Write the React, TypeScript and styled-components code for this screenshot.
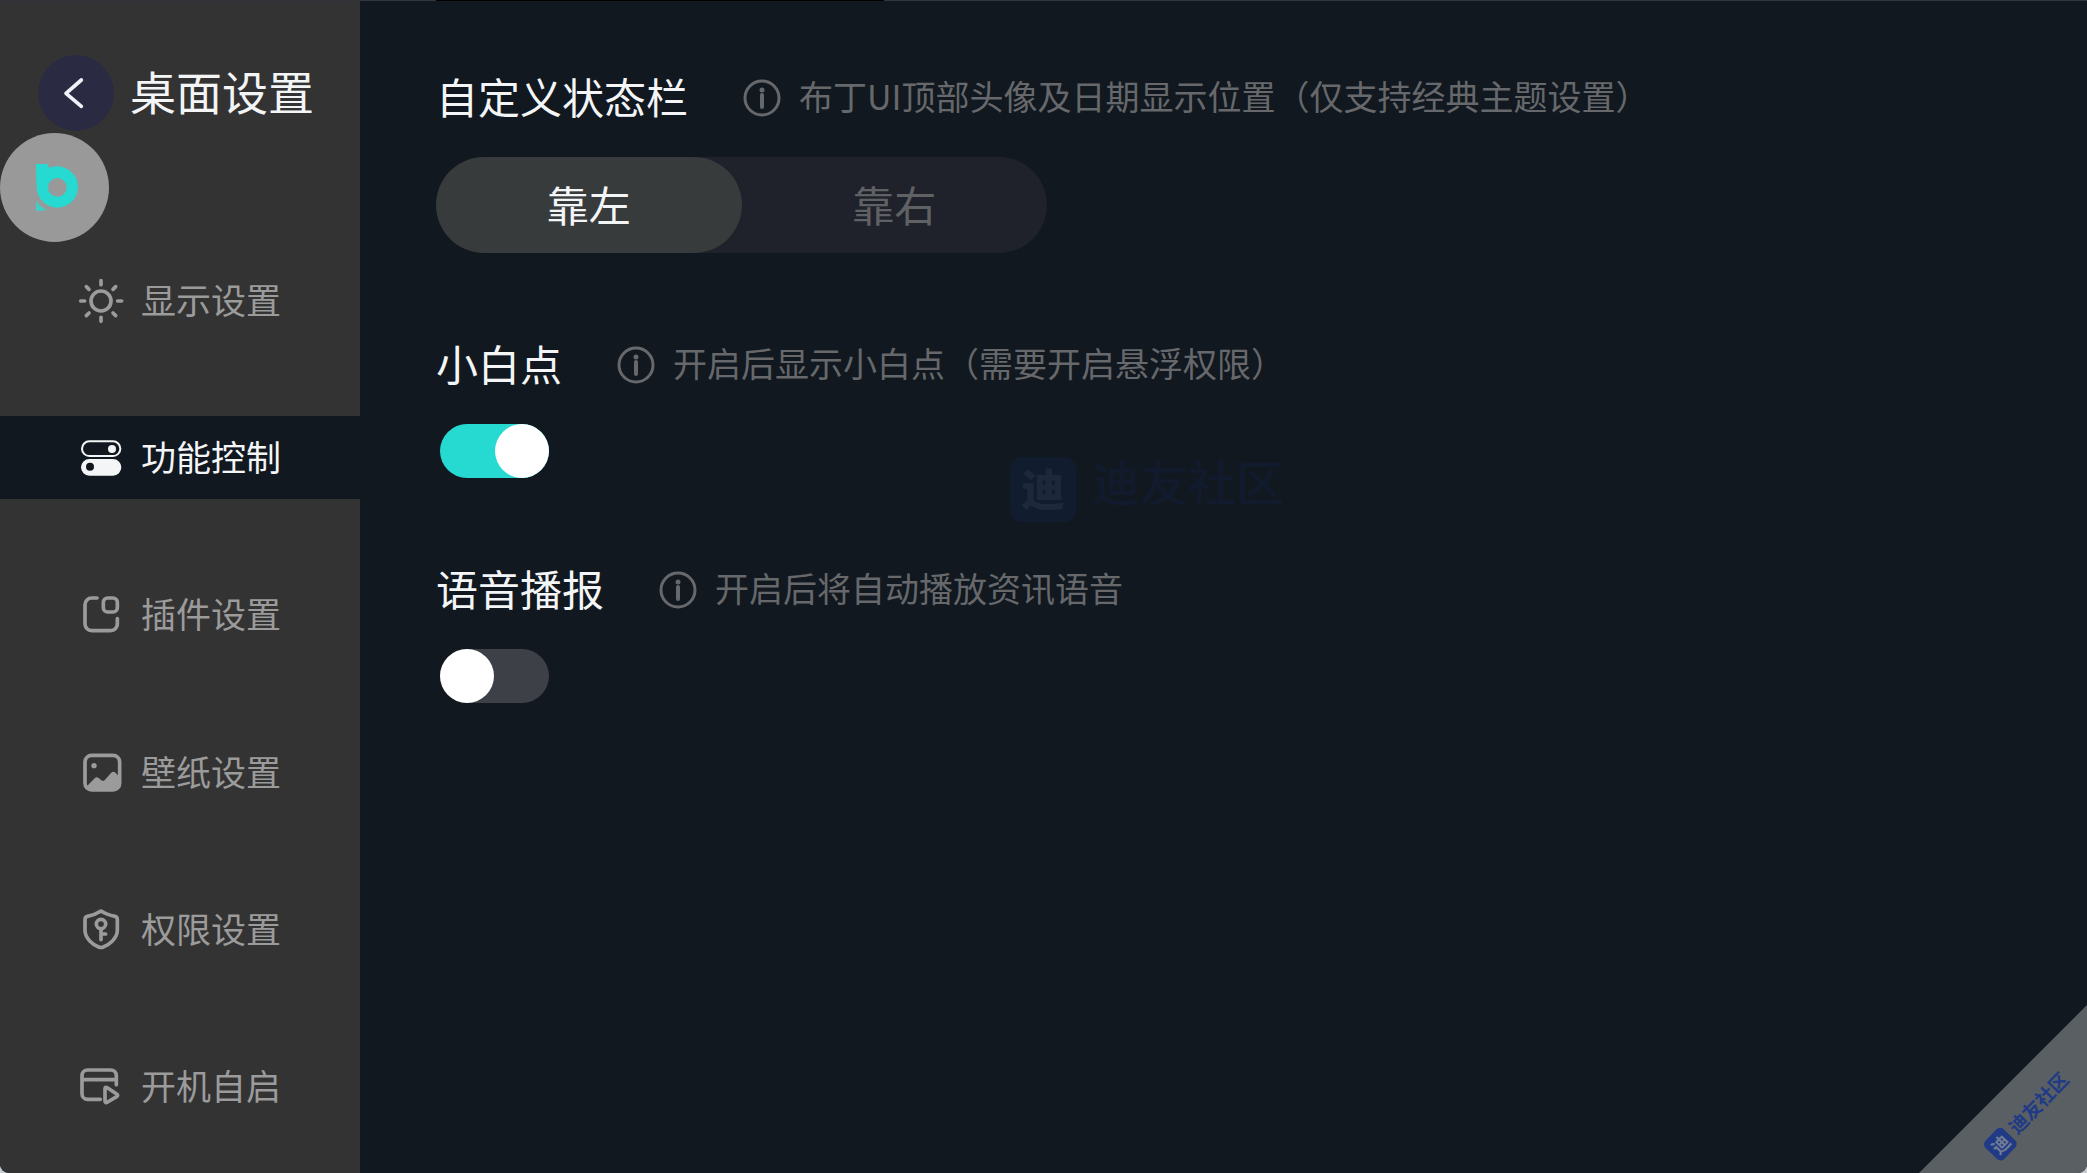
import React, { useState } from "react";
import styled, { createGlobalStyle } from "styled-components";

const color = {
  page: "#11181f",
  sidebar: "#333333",
  muted: "#9b9b9b",
  hint: "#66686b",
  text: "#f3f5f7",
  accent: "#26dad1",
};

const GlobalStyle = createGlobalStyle`
  * { box-sizing: border-box; }
  body {
    margin: 0;
    background: #c9ccd0;
    color: ${color.text};
    font-family: "Noto Sans CJK SC", "Noto Sans", sans-serif;
  }
  button, input { font: inherit; margin: 0; }
`;

const Screen = styled.div`
  position: relative;
  display: grid;
  grid-template-columns: 360px minmax(0, 1fr);
  min-height: 100vh;
  background: ${color.page};
  border-radius: 0 0 9px 9px;
  overflow: hidden;
`;

const TopEdge = styled.div`
  position: absolute;
  inset: 0 0 auto;
  height: 1px;
  background: linear-gradient(90deg, #30363b 436px, #000 436px, #000 884px, #30363b 884px);
`;

const Sidebar = styled.aside`
  display: flex;
  flex-direction: column;
  background: ${color.sidebar};
`;

const SidebarHeader = styled.header`
  display: flex;
  align-items: flex-start;
  gap: 16px;
  height: 259px;
  padding: 55px 0 0 38px;
`;

const BackButton = styled.button`
  display: flex;
  width: 76px;
  height: 76px;
  padding: 0;
  border: 0;
  border-radius: 50%;
  background: #2a2b43;
  cursor: pointer;
`;

const SidebarTitle = styled.h1`
  margin: 0;
  font-size: 46px;
  font-weight: 400;
  line-height: 70px;
  white-space: nowrap;
`;

const Nav = styled.nav`
  flex: 1;
  display: flex;
  flex-direction: column;
  justify-content: space-between;
  gap: 24px;
  padding-bottom: 44px;
`;

const NavLink = styled.a<{ $active: boolean }>`
  display: flex;
  align-items: center;
  gap: 18px;
  height: 83px;
  padding-left: 79px;
  color: ${(p) => (p.$active ? color.text : color.muted)};
  background: ${(p) => (p.$active ? color.page : "transparent")};
  text-decoration: none;
`;

const NavLabel = styled.span`
  padding-bottom: 4px;
  font-size: 35px;
  line-height: 48px;
  white-space: nowrap;
`;

const NavIcon = styled.svg`
  flex: none;
  width: 44px;
  height: 44px;
  overflow: visible;
  fill: none;
  stroke: currentColor;
  stroke-width: 11;
  stroke-linecap: round;
  stroke-linejoin: round;
`;

const FloatingBall = styled.button`
  position: absolute;
  left: 0;
  top: 133px;
  display: flex;
  width: 109px;
  height: 109px;
  padding: 0;
  border: 0;
  border-radius: 50%;
  background: #999999;
  cursor: pointer;
`;

const Main = styled.main`
  display: flex;
  flex-direction: column;
  align-items: flex-start;
  padding: 68px 76px;
`;

const Section = styled.section`
  margin-bottom: 82px;
`;

const SectionHead = styled.div`
  display: flex;
  align-items: flex-start;
  height: 60px;
  white-space: nowrap;
`;

const SectionTitle = styled.h2`
  margin: 0 55px 0 0;
  font-size: 42px;
  font-weight: 400;
  line-height: 56px;
`;

const InfoIcon = styled.svg`
  flex: none;
  width: 38px;
  height: 38px;
  margin: 11px 18px 0 0;
  color: ${color.hint};
`;

const Hint = styled.p`
  margin: 0;
  color: ${color.hint};
  font-size: 34px;
  line-height: 56px;
`;

const Segmented = styled.div`
  display: grid;
  grid-template-columns: 1fr 1fr;
  width: 611px;
  height: 96px;
  margin-top: 29px;
  border-radius: 48px;
  background: #1f222a;
`;

const Segment = styled.label`
  display: flex;
  align-items: center;
  justify-content: center;
  padding-bottom: 2px;
  border-radius: 48px;
  color: #606164;
  font-size: 42px;
  line-height: 56px;
  cursor: pointer;

  &:has(input:checked) {
    background: #383b3b;
    color: ${color.text};
  }
`;

const SegmentInput = styled.input`
  appearance: none;
  width: 0;
  height: 0;
`;

const Switch = styled.input`
  appearance: none;
  display: flex;
  width: 109px;
  height: 54px;
  margin: 29px 0 0 4px;
  border-radius: 27px;
  background: #3d4047;
  cursor: pointer;

  &::before {
    content: "";
    width: 54px;
    height: 54px;
    border-radius: 50%;
    background: #ffffff;
  }

  &:checked {
    justify-content: flex-end;
    background: ${color.accent};
  }
`;

const Watermark = styled.div`
  position: absolute;
  left: 1010px;
  top: 457px;
  display: flex;
  gap: 16px;
  color: #121b2d;
  font-size: 48px;
  font-weight: 500;
  line-height: 46px;
  pointer-events: none;
`;

const WatermarkBadge = styled.span`
  width: 66px;
  height: 65px;
  border-radius: 12px;
  background: #111c2f;
  color: #1e283b;
  font-size: 44px;
  font-weight: 900;
  line-height: 60px;
  text-align: center;
`;

const Ribbon = styled.div`
  position: absolute;
  right: 0;
  bottom: 0;
  display: flex;
  align-items: center;
  justify-content: center;
  width: 168px;
  height: 168px;
  padding: 52px 0 0 52px;
  background: #595f63;
  clip-path: polygon(100% 0, 100% 100%, 0 100%);
`;

const RibbonMark = styled.div`
  flex: none;
  display: flex;
  gap: 5px;
  color: #203a86;
  font-size: 19px;
  font-weight: 700;
  line-height: 22px;
  white-space: nowrap;
  transform: rotate(-46deg);
`;

const RibbonBadge = styled.span`
  width: 26px;
  height: 26px;
  border-radius: 5px;
  background: #203a86;
  color: #717c94;
  font-size: 18px;
  line-height: 24px;
  text-align: center;
`;

const icons = {
  display: (
    <NavIcon viewBox="236 834 132 132" aria-hidden="true">
      <circle cx="302" cy="900" r="30" />
      <path d="M302 839v12M302 949v12M241 900h12M352 900h12M258 857l8 8M338 936l8 8M346 857l-8 8M266 936l-8 8" />
    </NavIcon>
  ),
  control: (
    <NavIcon viewBox="236 106 132 132" aria-hidden="true">
      <path d="M267 122h71a22 22 0 0 1 0 44h-71a22 22 0 0 1 0-44z" style={{ strokeWidth: 6 }} />
      <circle cx="335" cy="145" r="12" fill="currentColor" stroke="none" />
      <path
        d="M267 175h71a25 25 0 0 1 0 50h-71a25 25 0 0 1 0-50zM269 186a12 12 0 1 0 0 24a12 12 0 0 0 0-24z"
        fill="currentColor"
        fillRule="evenodd"
        stroke="none"
      />
    </NavIcon>
  ),
  plugin: (
    <NavIcon viewBox="236 579 132 132" aria-hidden="true">
      <path d="M290 594h-16a20 20 0 0 0-20 20v58a20 20 0 0 0 20 20h57a20 20 0 0 0 20-20v-16" />
      <rect x="309" y="594" width="42" height="42" rx="13" />
    </NavIcon>
  ),
  wallpaper: (
    <NavIcon viewBox="236 61 132 132" aria-hidden="true">
      <rect x="254" y="74" width="104" height="104" rx="20" />
      <circle cx="281" cy="105" r="8" fill="currentColor" stroke="none" />
      <path
        d="M258 168l25-25q6-6 13 0l7 6q6 4 11-2l18-20q7-8 14 0l12 12v24q0 15-15 15h-70q-12 0-15-10z"
        fill="currentColor"
        stroke="none"
      />
    </NavIcon>
  ),
  permission: (
    <NavIcon viewBox="236 533 132 132" aria-hidden="true">
      <path d="M302 542c12 8 27 13 42 16q7 2 7 10v32c0 25-25 43-42 50q-7 3-14 0c-17-7-41-25-41-50v-32q0-8 7-10c15-3 29-8 41-16z" />
      <circle cx="302" cy="581" r="14" />
      <path d="M302 597v31M304 611h12" />
    </NavIcon>
  ),
  startup: (
    <NavIcon viewBox="236 104 132 132" aria-hidden="true">
      <path d="M300 207h-38a17 17 0 0 1-17-17v-54a17 17 0 0 1 17-17h69a17 17 0 0 1 17 17v27M247 148h100" />
      <path d="M314 175v37q0 8 8 3l27-16q6-4 0-8l-27-18q-8-5-8 2z" />
    </NavIcon>
  ),
};

const navItems = [
  { id: "display", label: "显示设置", icon: icons.display },
  { id: "control", label: "功能控制", icon: icons.control },
  { id: "plugin", label: "插件设置", icon: icons.plugin },
  { id: "wallpaper", label: "壁纸设置", icon: icons.wallpaper },
  { id: "permission", label: "权限设置", icon: icons.permission },
  { id: "startup", label: "开机自启", icon: icons.startup },
];

function SectionHeader({ id, title, hint }: { id: string; title: string; hint: string }) {
  return (
    <SectionHead>
      <SectionTitle id={id}>{title}</SectionTitle>
      <InfoIcon viewBox="0 0 38 38" aria-hidden="true">
        <circle cx="19" cy="19" r="17" fill="none" stroke="currentColor" strokeWidth="3" />
        <circle cx="19" cy="11" r="2.5" fill="currentColor" />
        <path d="M19 16v12" stroke="currentColor" strokeWidth="4" strokeLinecap="round" />
      </InfoIcon>
      <Hint>{hint}</Hint>
    </SectionHead>
  );
}

export default function App() {
  const [active, setActive] = useState("control");
  const [side, setSide] = useState("left");
  const [dot, setDot] = useState(true);
  const [voice, setVoice] = useState(false);

  return (
    <>
      <GlobalStyle />
      <Screen>
        <Sidebar>
          <SidebarHeader>
            <BackButton type="button" aria-label="返回">
              <svg viewBox="113 165 228 228" width="76" height="76" aria-hidden="true">
                <path
                  d="M243 240L197 280L243 319"
                  fill="none"
                  stroke="#f1f1f8"
                  strokeWidth="11"
                  strokeLinecap="round"
                  strokeLinejoin="round"
                />
              </svg>
            </BackButton>
            <SidebarTitle>桌面设置</SidebarTitle>
          </SidebarHeader>
          <Nav>
            {navItems.map((item) => (
              <NavLink
                key={item.id}
                href={`#${item.id}`}
                $active={item.id === active}
                onClick={() => setActive(item.id)}
              >
                {item.icon}
                <NavLabel>{item.label}</NavLabel>
              </NavLink>
            ))}
          </Nav>
        </Sidebar>

        <Main>
          <Section>
            <SectionHeader
              id="status-bar"
              title="自定义状态栏"
              hint="布丁UI顶部头像及日期显示位置（仅支持经典主题设置）"
            />
            <Segmented role="radiogroup" aria-labelledby="status-bar">
              <Segment>
                <SegmentInput type="radio" name="side" checked={side === "left"} onChange={() => setSide("left")} />
                靠左
              </Segment>
              <Segment>
                <SegmentInput type="radio" name="side" checked={side === "right"} onChange={() => setSide("right")} />
                靠右
              </Segment>
            </Segmented>
          </Section>
          <Section>
            <SectionHeader id="white-dot" title="小白点" hint="开启后显示小白点（需要开启悬浮权限）" />
            <Switch
              type="checkbox"
              role="switch"
              aria-labelledby="white-dot"
              checked={dot}
              onChange={(e) => setDot(e.target.checked)}
            />
          </Section>
          <Section>
            <SectionHeader id="voice" title="语音播报" hint="开启后将自动播放资讯语音" />
            <Switch
              type="checkbox"
              role="switch"
              aria-labelledby="voice"
              checked={voice}
              onChange={(e) => setVoice(e.target.checked)}
            />
          </Section>
        </Main>

        <TopEdge />
        <FloatingBall type="button" aria-label="布丁">
          <svg viewBox="0 399 327 327" width="109" height="109" aria-hidden="true">
            <path
              d="M108 492h30q8 0 9 12q12-5 25-5a62 62 0 1 1-62 62q-2-30-2-69zM172 534a28 28 0 1 0 0 56a28 28 0 0 0 0-56z"
              fill="#26dad1"
              fillRule="evenodd"
            />
            <path d="M108 602q12 18 32 27q-16 5-32 3z" fill="#3fcfc8" />
          </svg>
        </FloatingBall>
        <Watermark>
          <WatermarkBadge>迪</WatermarkBadge>
          迪友社区
        </Watermark>
        <Ribbon>
          <RibbonMark>
            <RibbonBadge>迪</RibbonBadge>
            迪友社区
          </RibbonMark>
        </Ribbon>
      </Screen>
    </>
  );
}
